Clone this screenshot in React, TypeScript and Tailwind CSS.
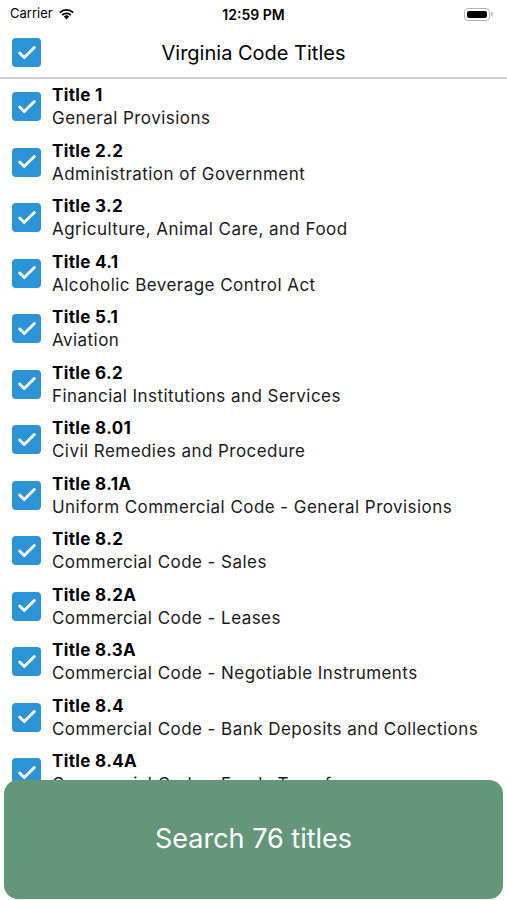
import { Check } from 'lucide-react';

const titles = [
    ['Title 1', 'General Provisions'],
    ['Title 2.2', 'Administration of Government'],
    ['Title 3.2', 'Agriculture, Animal Care, and Food'],
    ['Title 4.1', 'Alcoholic Beverage Control Act'],
    ['Title 5.1', 'Aviation'],
    ['Title 6.2', 'Financial Institutions and Services'],
    ['Title 8.01', 'Civil Remedies and Procedure'],
    ['Title 8.1A', 'Uniform Commercial Code - General Provisions'],
    ['Title 8.2', 'Commercial Code - Sales'],
    ['Title 8.2A', 'Commercial Code - Leases'],
    ['Title 8.3A', 'Commercial Code - Negotiable Instruments'],
    ['Title 8.4', 'Commercial Code - Bank Deposits and Collections'],
    ['Title 8.4A', 'Commercial Code - Funds Transfers'],
    ['Title 8.5A', 'Commercial Code - Letters of Credit'],
];

function Checkbox() {
    return (
        <div className="w-[29px] h-[29px] rounded-[4px] bg-[#2b93d6] flex items-center justify-center shrink-0">
            <Check className="text-white w-[22px] h-[22px]" strokeWidth={3.2} />
        </div>
    );
}

function StatusBar() {
    return (
        <div className="h-[28px] flex items-center justify-between px-[10px] text-black">
            <div className="flex items-center gap-[5px] w-[120px]">
                <span className="text-[13px]">Carrier</span>
                <svg width="17" height="12" viewBox="0 0 17 12">
                    <path d="M8.5 11.5 L5.8 8.6 A3.8 3.8 0 0 1 11.2 8.6 Z" fill="#000" />
                    <path d="M3.6 6.4 A7 7 0 0 1 13.4 6.4 L12.1 7.7 A5.2 5.2 0 0 0 4.9 7.7 Z" fill="#000" />
                    <path d="M1.2 4 A10.4 10.4 0 0 1 15.8 4 L14.5 5.3 A8.6 8.6 0 0 0 2.5 5.3 Z" fill="#000" />
                </svg>
            </div>
            <span className="text-[14px] font-semibold">12:59 PM</span>
            <div className="w-[120px] flex justify-end pr-[4px]">
                <div className="flex items-center">
                    <div className="w-[26px] h-[13px] rounded-[4px] border border-[#b5b5b5] p-[2px]">
                        <div className="w-full h-full rounded-[2px] bg-black" />
                    </div>
                    <div className="w-[2px] h-[4px] rounded-r-sm bg-[#b5b5b5] ml-[1px]" />
                </div>
            </div>
        </div>
    );
}

export default function App() {
    return (
        <div className="relative w-[507px] h-[900px] overflow-hidden bg-white" style={{ fontFamily: 'Inter, "Noto Sans", sans-serif' }}>
            <StatusBar />
            <div className="relative h-[51px] flex items-center px-[12px] border-b-2 border-[#cfcfcf]">
                <Checkbox />
                <div className="absolute inset-0 flex items-center justify-center pointer-events-none">
                    <span className="text-[20px] text-black">Virginia Code Titles</span>
                </div>
            </div>
            <ul>
                {titles.map(([t, d]) => (
                    <li key={t} className="h-[55.5px] flex items-center pl-[12px]">
                        <Checkbox />
                        <div className="ml-[11px] flex flex-col mt-[1px]">
                            <span className="text-[17px] font-bold leading-[23px] tracking-[0.35px] text-black">{t}</span>
                            <span className="text-[17px] leading-[23px] tracking-[0.45px] text-[#1a1a1a]">{d}</span>
                        </div>
                    </li>
                ))}
            </ul>
            <button className="absolute left-[4px] right-[4px] top-[780px] h-[119px] rounded-[14px] bg-[#64977a] flex items-center justify-center">
                <span className="text-white text-[27px]">Search 76 titles</span>
            </button>
        </div>
    );
}
